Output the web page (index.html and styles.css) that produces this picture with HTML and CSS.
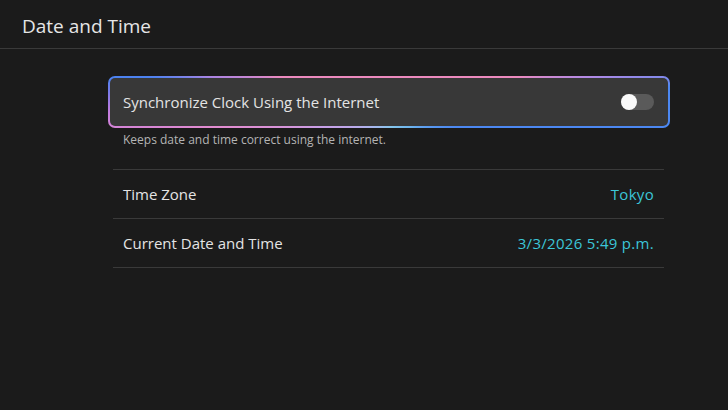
FILE: index.html
```html
<!DOCTYPE html>
<html lang="en">

<head>
    <meta charset="UTF-8">
    <meta name="viewport" content="width=device-width, initial-scale=1.0">
    <title>Date and Time</title>
    <link rel="stylesheet" href="styles.css">
</head>

<body>
    <header class="page-header">
        <h1>Date and Time</h1>
    </header>

    <main class="settings">
        <div class="sync-card">
            <span class="row-label">Synchronize Clock Using the Internet</span>
            <span class="toggle"><span class="knob"></span></span>
        </div>
        <p class="hint">Keeps date and time correct using the internet.</p>

        <div class="setting-list">
            <div class="setting-row">
                <span class="row-label">Time Zone</span>
                <span class="row-value">Tokyo</span>
            </div>
            <div class="setting-row">
                <span class="row-label">Current Date and Time</span>
                <span class="row-value">3/3/2026 5:49 p.m.</span>
            </div>
        </div>
    </main>
</body>

</html>
```

FILE: styles.css
```css
body {
    margin: 0;
    padding: 0;
    height: 410px;
    background-color: #1b1b1b;
    font-family: "Open Sans", "Noto Sans", sans-serif;
    color: #e2e2e2;
}

.page-header {
    height: 45px;
    display: flex;
    align-items: center;
    padding: 3px 0 0 22px;
    border-bottom: 1px solid #3a3a3a;
}

.page-header h1 {
    margin: 0;
    font-size: 19px;
    font-weight: 400;
    color: #e6e6e6;
}

.settings {
    width: 551px;
    margin-left: 113px;
    padding-top: 27px;
}

/* selected row, outlined with the cursor gradient */
.sync-card {
    height: 48px;
    margin: 0 -6px 0 -5px;
    padding: 0 14px 0 13px;
    display: flex;
    align-items: center;
    justify-content: space-between;
    border: 2px solid transparent;
    border-radius: 7px;
    background:
        linear-gradient(#383838, #383838) padding-box,
        conic-gradient(from 0deg,
            #ec8abe 0deg,
            #ec8abe 79deg,
            #b08ae6 83deg,
            #4c88f2 87deg,
            #4c88f2 110deg,
            #6fb6ee 140deg,
            #86c6ec 175deg,
            #a9b6ee 215deg,
            #c8a0e8 250deg,
            #e28cd0 262deg,
            #c47ce0 268deg,
            #7a7ae8 272deg,
            #4c82f0 275deg,
            #4c82f0 276deg,
            #ac84e2 278deg,
            #ec8abe 283deg,
            #ec8abe 360deg) border-box;
}

.row-label {
    font-size: 15px;
    color: #e4e4e4;
}

.toggle {
    position: relative;
    width: 33px;
    height: 16px;
    border-radius: 8px;
    background-color: #5a5a5a;
}

.toggle .knob {
    position: absolute;
    left: 0;
    top: 0;
    width: 16px;
    height: 16px;
    border-radius: 50%;
    background-color: #fafafa;
}

.hint {
    margin: 4px 0 0 10px;
    padding-bottom: 21px;
    line-height: 16px;
    font-size: 12px;
    color: #b4b4b4;
}

.setting-list {
    border-bottom: 1px solid #3a3a3a;
}

.setting-row {
    height: 48px;
    padding: 0 10px;
    display: flex;
    align-items: center;
    justify-content: space-between;
    border-top: 1px solid #3a3a3a;
}

.row-value {
    font-size: 15px;
    letter-spacing: 0.3px;
    color: #3cc6d8;
}
```
